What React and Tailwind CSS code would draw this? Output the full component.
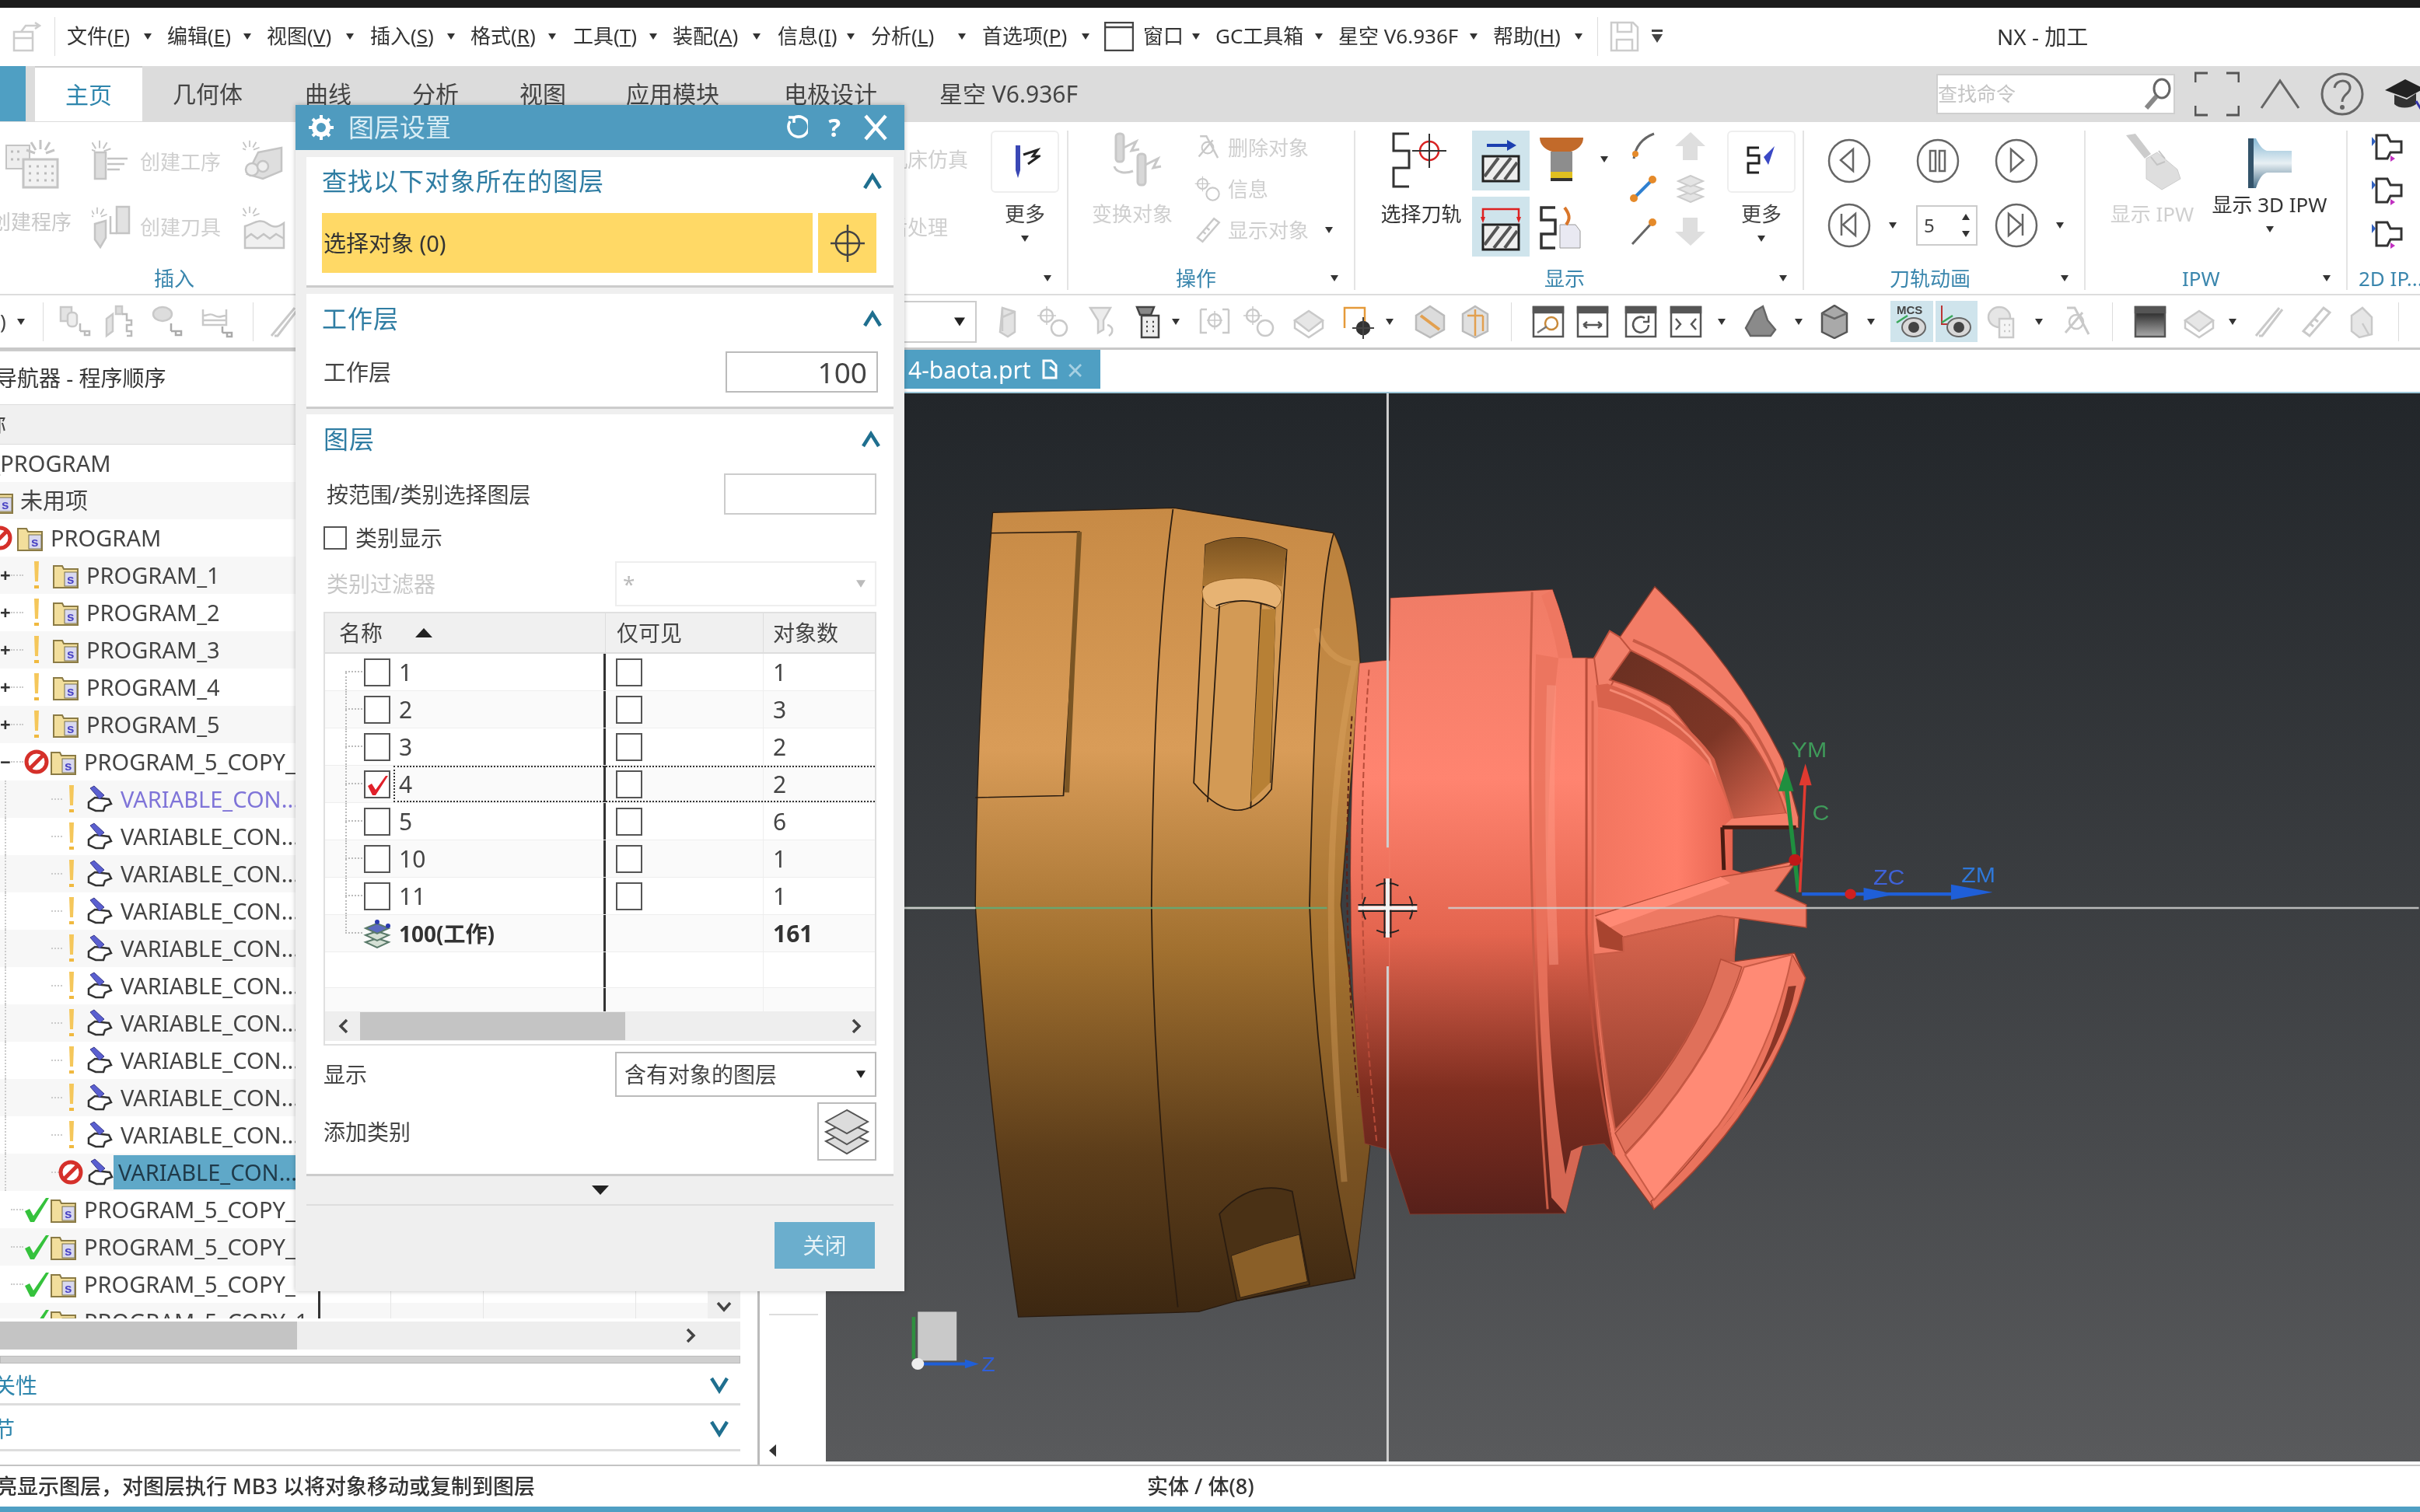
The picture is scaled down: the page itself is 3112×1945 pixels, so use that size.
import React from "react";

const Caret = ({ className = "", fill = "#333" }) => (
  <svg className={`w-[10px] h-[10px] shrink-0 ${className}`} viewBox="0 0 10 10">
    <path d="M0 1h10L5 9z" fill={fill} />
  </svg>
);

const Sep = ({ className = "" }) => <div className={`w-[1px] h-[50px] bg-[#dcdcdc] shrink-0 ${className}`} />;

/* ---------- small drawings ---------- */
function Folder({ className = "" }) {
  return (
    <svg className={`w-[33px] h-[33px] shrink-0 ${className}`} viewBox="0 0 33 33">
      <path d="M1 4h11l2 4h18v24H1z" fill="#f2de9c" stroke="#8b7b45" strokeWidth="2" />
      <rect x="15" y="12" width="16" height="18" fill="#d9d9ef" stroke="#77704f" />
      <text x="18" y="27" fontSize="17" fontWeight="700" fill="#4a44c4" fontFamily="Liberation Sans">s</text>
    </svg>
  );
}
function NoEntry({ className = "" }) {
  return (
    <svg className={`w-[34px] h-[34px] shrink-0 ${className}`} viewBox="0 0 34 34">
      <circle cx="17" cy="17" r="13" fill="#fff" stroke="#d5302a" strokeWidth="5" />
      <path d="M8 26L26 8" stroke="#d5302a" strokeWidth="5" />
    </svg>
  );
}
function Warn({ className = "" }) {
  return (
    <svg className={`w-[8px] h-[38px] shrink-0 ${className}`} viewBox="0 0 8 38">
      <path d="M1 1h6l-1 26H2z" fill="#f5c75a" />
      <rect x="1" y="32" width="6" height="4" fill="#f0b93f" />
    </svg>
  );
}
function OpIcon({ className = "" }) {
  return (
    <svg className={`w-[34px] h-[36px] shrink-0 ${className}`} viewBox="0 0 34 36">
      <path d="M3 22l8-6 18 2 3 6-8 3-2 6H12L3 29z" fill="#fff" stroke="#333" strokeWidth="2.5" />
      <path d="M5 4l5-3 13 12-6 5z" fill="#5a5fd0" stroke="#3a3a8a" />
    </svg>
  );
}
function GreenCheck({ className = "" }) {
  return (
    <svg className={`w-[34px] h-[34px] shrink-0 ${className}`} viewBox="0 0 34 34">
      <path d="M2 19l6-3 5 9L29 2h4L14 33H9z" fill="#35c23c" />
    </svg>
  );
}
function Chevron({ up = false, className = "" }) {
  return (
    <svg className={`w-[26px] h-[22px] shrink-0 ${className}`} viewBox="0 0 26 22">
      <path d={up ? "M3 20L13 4l10 16" : "M3 2l10 16L23 2"} fill="none" stroke="#1f6f8f" strokeWidth="4.5" />
    </svg>
  );
}
function Arrow({ left = false, className = "" }) {
  return (
    <svg className={`w-[16px] h-[20px] shrink-0 ${className}`} viewBox="0 0 16 20">
      <path d={left ? "M12 2L4 10l8 8" : "M4 2l8 8-8 8"} fill="none" stroke="#444" strokeWidth="3.5" />
    </svg>
  );
}

const burst = "M30 1v12M18 4l6 10M42 4l-6 10M12 14l11 4M48 14l-11 4";

/* greyed-out ribbon / toolbar glyphs, the video blur makes them soft shapes */
function Ghost({ kind = "a", className = "w-[44px] h-[44px]" }) {
  const g = "#c9c9c9";
  return (
    <svg className={`shrink-0 ${className}`} viewBox="0 0 44 44" fill="none" stroke={g} strokeWidth="2.5">
      {kind === "a" && (
        <>
          <path d="M14 4l16 5v26l-9 6-10-6z" fill="#e3e3e3" />
          <path d="M14 4v30M30 9L14 16" />
        </>
      )}
      {kind === "b" && (
        <>
          <circle cx="14" cy="14" r="8" />
          <path d="M14 2v24M2 14h24" strokeWidth="1.5" />
          <circle cx="30" cy="30" r="10" />
        </>
      )}
      {kind === "c" && (
        <>
          <path d="M6 4h26l-9 16v12l-7 4V20z" fill="#ececec" />
          <path d="M28 26c8 2 8 10 2 14" />
        </>
      )}
      {kind === "d" && (
        <>
          <path d="M4 20L22 8l18 12-18 14z" fill="#e6e6e6" />
          <path d="M4 20v10l18 12 18-12V20" />
        </>
      )}
      {kind === "e" && (
        <>
          <path d="M4 6h8M4 6v30h8M40 6h-8M40 6v30h-8" />
          <circle cx="22" cy="20" r="8" />
          <path d="M22 8v24M12 20h20" strokeWidth="1.5" />
        </>
      )}
      {kind === "f" && (
        <>
          <path d="M10 4L20 4 38 38M30 10L8 36" strokeWidth="3" />
          <circle cx="22" cy="22" r="9" />
        </>
      )}
      {kind === "g" && (
        <>
          <ellipse cx="18" cy="16" rx="14" ry="13" fill="#e6e6e6" />
          <rect x="18" y="18" width="18" height="24" fill="#f5f5f5" />
          <path d="M24 26h2M24 34h2M30 26h2M30 34h2" />
        </>
      )}
      {kind === "h" && <path d="M6 40L36 4M10 40l4 0L40 6" strokeWidth="3" />}
      {kind === "i" && <path d="M6 34L32 4l8 6-26 30zM14 24l5 4M20 18l5 4" strokeWidth="3" />}
      {kind === "j" && (
        <>
          <path d="M10 14l14-10 12 12v22l-16 4-10-8z" fill="#e6e6e6" />
          <path d="M24 24l8 14" />
        </>
      )}
      {kind === "n1" && (
        <>
          <rect x="3" y="3" width="14" height="18" fill="#e3e3e3" />
          <rect x="12" y="10" width="12" height="18" rx="5" fill="#eee" />
          <path d="M28 24v10M28 34h10M34 34h6v5h-6z" stroke="#bbb" />
        </>
      )}
      {kind === "n2" && (
        <>
          <rect x="18" y="2" width="8" height="10" fill="#ddd" />
          <path d="M6 18l8-6v22l-8 6z" fill="#e3e3e3" />
          <path d="M26 12h6v8h6v6h-6v8h6v6h-6" stroke="#bbb" />
        </>
      )}
      {kind === "n3" && (
        <>
          <ellipse cx="15" cy="12" rx="12" ry="9" fill="#ddd" />
          <path d="M26 24v10M26 34h10M32 34h7v5h-7z" stroke="#aaa" />
        </>
      )}
      {kind === "n4" && (
        <>
          <path d="M3 6v20h30V6M3 14c8 0 8-4 15 0s8 0 15 0M3 20h30" />
          <path d="M28 28v8M28 36h8M34 36h6v5h-6z" stroke="#aaa" />
        </>
      )}
    </svg>
  );
}
function ProgGhost() {
  return (
    <svg className="w-[72px] h-[72px] mt-[5px] shrink-0" viewBox="0 0 72 72" fill="none" stroke="#c4c4c4" strokeWidth="2">
      <rect x="4" y="14" width="30" height="30" fill="#eee" />
      <rect x="26" y="32" width="44" height="36" fill="#f2f2f2" strokeWidth="3" />
      <path d="M33 41h3M43 41h3M53 41h3M62 41h3M33 50h3M43 50h3M53 50h3M62 50h3M33 59h3M43 59h3M53 59h3M62 59h3M10 22h3M18 22h3M10 32h3M18 32h3" strokeWidth="3" stroke="#bbb" />
      <path d={burst} transform="translate(18 6)" strokeWidth="3" />
    </svg>
  );
}
function OpGhost() {
  return (
    <svg className="w-[48px] h-[56px] shrink-0" viewBox="0 0 48 56" fill="none" stroke="#c4c4c4" strokeWidth="2.5">
      <rect x="4" y="16" width="14" height="34" fill="#dedede" />
      <path d="M20 24h26M20 31h22M20 38h16" />
      <path d={burst} transform="translate(-14 0) scale(.8)" />
    </svg>
  );
}
function ToolGhost() {
  return (
    <svg className="w-[50px] h-[56px] shrink-0" viewBox="0 0 50 56" fill="none" stroke="#c4c4c4" strokeWidth="2.5">
      <path d="M4 24l14-4v22l-7 12-7-10z" fill="#ddd" />
      <rect x="32" y="2" width="16" height="34" fill="#e2e2e2" />
      <path d="M24 14v22h8" />
      <path d={burst} transform="translate(-14 2) scale(.7)" />
    </svg>
  );
}
function GeoGhost() {
  return (
    <svg className="w-[56px] h-[56px] mt-[12px] shrink-0" viewBox="0 0 56 56" fill="none" stroke="#c4c4c4" strokeWidth="2.5">
      <path d="M20 16l30-6v30L26 50 6 44z" fill="#dedede" />
      <circle cx="12" cy="38" r="8" fill="#eee" />
      <circle cx="26" cy="34" r="7" fill="#eee" />
      <path d={burst} transform="translate(-12 0) scale(.7)" />
    </svg>
  );
}
function WorkGhost() {
  return (
    <svg className="w-[56px] h-[56px] mt-[29px] shrink-0" viewBox="0 0 56 56" fill="none" stroke="#c4c4c4" strokeWidth="2.5">
      <path d="M3 26v28h50V22c-8 6-14 6-22 0s-16 0-28 4z" fill="#f0f0f0" />
      <path d="M3 42l8-6 8 6 8-6 8 6 8-6 10 6" />
      <path d={burst} transform="translate(-12 0) scale(.7)" />
    </svg>
  );
}
function TransformGhost() {
  return (
    <svg className="w-[75px] h-[72px] mt-[2px] shrink-0" viewBox="0 0 75 72" fill="none" stroke="#c8c8c8" strokeWidth="3">
      <rect x="16" y="2" width="10" height="36" rx="4" fill="#d8d8d8" />
      <path d="M26 20l16-8-6 12 10-2" />
      <rect x="44" y="28" width="10" height="40" rx="4" fill="#d8d8d8" />
      <path d="M54 42l16-8-6 12 10-2M14 44c2 8 14 10 24 6" />
    </svg>
  );
}
function ToolMini({ kind }) {
  return (
    <svg className="w-[44px] h-[44px] shrink-0" viewBox="0 0 44 44" fill="none" stroke="#444" strokeWidth="2.5">
      {kind === "filter" && (
        <>
          <path d="M8 3h22l-4 10H12z" fill="#888" />
          <rect x="14" y="14" width="22" height="28" fill="#eee" />
          <path d="M20 22h2M28 22h2M20 28h2M28 28h2M20 34h2M28 34h2" />
        </>
      )}
      {kind === "target" && (
        <>
          <path d="M4 30V4h26v18" stroke="#e59a3a" />
          <circle cx="28" cy="30" r="8" fill="#333" stroke="#333" />
          <path d="M28 16v28M14 30h28" strokeWidth="2" />
        </>
      )}
      {kind === "cubeA" && (
        <>
          <path d="M22 2l18 12v18L22 42 4 32V14z" fill="#dcdcdc" stroke="#bbb" />
          <path d="M10 14l24 18" stroke="#e2a050" strokeWidth="4" />
        </>
      )}
      {kind === "cubeB" && (
        <>
          <path d="M22 2l16 10v22L22 42 6 34V12z" fill="#e0e0e0" stroke="#bbb" />
          <path d="M22 6v34M12 14l20 0M32 14v20" stroke="#e2a050" />
        </>
      )}
      {kind === "rock" && <path d="M14 8l10-6 6 18 10 12-6 8H8L2 30z" fill="#8a8a8a" stroke="#666" />}
      {kind === "solid" && (
        <>
          <path d="M22 1l16 10v24L22 43 6 35V11z" fill="#a9a9a9" stroke="#555" />
          <path d="M6 11l16 7 16-7" stroke="#666" />
        </>
      )}
    </svg>
  );
}
function WinMini({ kind }) {
  return (
    <svg className="w-[44px] h-[44px] shrink-0" viewBox="0 0 44 44" fill="none" stroke="#555" strokeWidth="2.5">
      <rect x="3" y="3" width="38" height="38" fill={kind === "black" ? "url(#blk)" : "#fff"} />
      <rect x="3" y="3" width="38" height="7" fill="#555" />
      {kind === "black" && (
        <defs>
          <linearGradient id="blk" x1="0" y1="0" x2="0" y2="1">
            <stop offset="0" stopColor="#111" />
            <stop offset="1" stopColor="#aaa" />
          </linearGradient>
        </defs>
      )}
      {kind === "zoom" && <circle cx="26" cy="24" r="8" stroke="#c98a3a" />}
      {kind === "zoom" && <path d="M8 36l12-8" stroke="#777" />}
      {kind === "pan" && <path d="M10 26h24M10 26l5-4M10 26l5 4M34 26l-5-4M34 26l-5 4" />}
      {kind === "rot" && <path d="M32 26a10 10 0 1 1-5-9M32 14v8h-7" />}
      {kind === "fit" && <path d="M9 18l6 7-6 7M35 18l-6 7 6 7" />}
    </svg>
  );
}
function EyeMini({ mcs }) {
  return (
    <svg className="w-[54px] h-[52px]" viewBox="0 0 54 52" fill="none">
      {mcs ? (
        <text x="8" y="17" fontSize="15" fontWeight="700" fill="#444" fontFamily="Liberation Sans">MCS</text>
      ) : (
        <path d="M8 6v24h16" stroke="#b33" strokeWidth="2" />
      )}
      <path d="M8 28l14-9" stroke="#3aa75a" strokeWidth="2.5" />
      <ellipse cx="30" cy="34" rx="15" ry="12" fill="#d8d8d8" stroke="#666" strokeWidth="2" />
      <circle cx="30" cy="34" r="7" fill="#444" />
    </svg>
  );
}
function CircleBtn({ kind }) {
  const d = {
    prev: "M33 14L17 28l16 14z",
    next: "M21 14l16 14-16 14z",
    first: "M18 14v28M36 14L20 28l16 14z",
    last: "M36 14v28M18 14l16 14-16 14z",
  }[kind];
  return (
    <svg className="w-[56px] h-[58px] shrink-0" viewBox="0 0 56 58" fill="none" stroke="#666" strokeWidth="2.5">
      <ellipse cx="28" cy="29" rx="26" ry="27" />
      {kind === "pause" ? (
        <>
          <rect x="18" y="16" width="7" height="26" />
          <rect x="30" y="16" width="7" height="26" />
        </>
      ) : (
        <path d={d} />
      )}
    </svg>
  );
}

/* ---------- top of the window ---------- */
function MenuCell({ label, hot, className }) {
  return (
    <div className={`flex items-center justify-between shrink-0 ${className}`}>
      <span className="whitespace-nowrap">
        {label}
        {hot && (
          <>
            (<u>{hot}</u>)
          </>
        )}
      </span>
      <Caret />
    </div>
  );
}

function MenuBar() {
  return (
    <div className="h-[75px] flex items-center bg-white text-[26px] text-[#333] shrink-0 pb-[2px]">
      <svg className="w-[40px] h-[40px] ml-[15px] shrink-0" viewBox="0 0 40 40" fill="none" stroke="#ccc" strokeWidth="2.5">
        <path d="M3 14h24v24H3zM3 22h24M12 14l6-8h16M30 2l6 4-6 4" />
      </svg>
      <Sep className="ml-[15px]" />
      <MenuCell label="文件" hot="F" className="w-[109px] ml-[15px]" />
      <MenuCell label="编辑" hot="E" className="w-[108px] ml-[20px]" />
      <MenuCell label="视图" hot="V" className="w-[112px] ml-[20px]" />
      <MenuCell label="插入" hot="S" className="w-[109px] ml-[21px]" />
      <MenuCell label="格式" hot="R" className="w-[110px] ml-[20px]" />
      <MenuCell label="工具" hot="T" className="w-[108px] ml-[22px]" />
      <MenuCell label="装配" hot="A" className="w-[113px] ml-[20px]" />
      <MenuCell label="信息" hot="I" className="w-[99px] ml-[22px]" />
      <MenuCell label="分析" hot="L" className="w-[122px] ml-[21px]" />
      <MenuCell label="首选项" hot="P" className="w-[138px] ml-[21px]" />
      <svg className="w-[38px] h-[38px] ml-[19px] shrink-0" viewBox="0 0 38 38" fill="none" stroke="#444" strokeWidth="2.5">
        <rect x="1" y="1" width="36" height="36" />
        <path d="M1 7h36" />
      </svg>
      <MenuCell label="窗口" className="w-[73px] ml-[12px]" />
      <MenuCell label="GC工具箱" className="w-[138px] ml-[20px]" />
      <MenuCell label="星空 V6.936F" className="w-[179px] ml-[20px]" />
      <MenuCell label="帮助" hot="H" className="w-[115px] ml-[20px]" />
      <Sep className="ml-[19px]" />
      <svg className="w-[38px] h-[40px] ml-[15px] shrink-0" viewBox="0 0 38 40" fill="none" stroke="#ccc" strokeWidth="2.5">
        <path d="M2 2h28l6 6v30H2zM10 2v12h18V2M9 38V24h20v14" />
      </svg>
      <svg className="w-[14px] h-[18px] ml-[16px] shrink-0" viewBox="0 0 14 18">
        <path d="M0 0h14v3H0zM0 6h14L7 17z" fill="#444" />
      </svg>
      <span className="ml-[430px] text-[28px] whitespace-nowrap">NX - 加工</span>
    </div>
  );
}

function RibbonTabs() {
  const tab = "shrink-0 whitespace-nowrap";
  return (
    <div className="h-[72px] flex items-center bg-[#dcdcdc] text-[30px] text-[#444] shrink-0 pb-[1px]">
      <div className="w-[33px] h-full bg-[#4f9fc3] shrink-0" />
      <div className="w-[138px] h-full ml-[12px] bg-white flex items-center justify-center text-[#2f86ad] shrink-0 border-t-2 border-[#ccc]">主页</div>
      <span className={`${tab} w-[93px] ml-[39px]`}>几何体</span>
      <span className={`${tab} w-[60px] ml-[77px]`}>曲线</span>
      <span className={`${tab} w-[60px] ml-[78px]`}>分析</span>
      <span className={`${tab} w-[60px] ml-[78px]`}>视图</span>
      <span className={`${tab} w-[120px] ml-[77px]`}>应用模块</span>
      <span className={`${tab} w-[120px] ml-[83px]`}>电极设计</span>
      <span className={`${tab} w-[194px] ml-[80px]`}>星空 V6.936F</span>
      <div className="w-[307px] h-[52px] ml-[1088px] bg-white border-2 border-[#cfcfcf] flex items-center justify-between pr-[2px] text-[25px] text-[#c4c4c4] shrink-0">
        <span>查找命令</span>
        <svg className="w-[38px] h-[44px]" viewBox="0 0 38 44" fill="none" stroke="#666" strokeWidth="3">
          <ellipse cx="25" cy="15" rx="10" ry="12" />
          <path d="M18 25L5 40" strokeWidth="6" stroke="#888" />
        </svg>
      </div>
      <svg className="w-[58px] h-[58px] ml-[25px] shrink-0" viewBox="0 0 58 58" fill="none" stroke="#555" strokeWidth="3">
        <path d="M1 14V2h16M41 2h16v12M1 44v12h16M41 56h16V44" />
      </svg>
      <svg className="w-[52px] h-[40px] ml-[26px] shrink-0" viewBox="0 0 52 40" fill="none" stroke="#666" strokeWidth="3">
        <path d="M2 38L26 3l24 35" />
      </svg>
      <svg className="w-[56px] h-[56px] ml-[26px] shrink-0" viewBox="0 0 56 56" fill="none" stroke="#666" strokeWidth="3">
        <circle cx="28" cy="28" r="26" />
        <path d="M18 20c2-12 20-12 20 0 0 8-10 8-10 18" />
        <circle cx="28" cy="45" r="1.5" />
      </svg>
      <svg className="w-[50px] h-[46px] ml-[27px] shrink-0" viewBox="0 0 50 46">
        <path d="M0 18L26 4l24 12-22 12z" fill="#222" />
        <path d="M12 24v12c6 6 20 6 28 0V22L28 30z" fill="#333" />
        <path d="M40 32l6 10" stroke="#33a" strokeWidth="3" />
      </svg>
    </div>
  );
}

function MoreBox({ children }) {
  return (
    <div className="w-[88px] flex flex-col items-center shrink-0">
      <div className="w-[88px] h-[80px] rounded-[6px] border-2 border-[#eee] flex items-center justify-center">{children}</div>
      <span className="text-[26px] leading-[30px] mt-[12px] text-[#444] whitespace-nowrap">更多</span>
      <Caret className="mt-[12px]" />
    </div>
  );
}

function Group({ w, label, pad, caret = true, children }) {
  return (
    <div className={`h-[205px] shrink-0 flex flex-col border-r-2 border-[#e4e4e4] ${w}`}>
      <div className="h-[175px] flex">{children}</div>
      <div className={`h-[30px] flex items-center justify-between pr-[20px] ${pad}`}>
        <span className="text-[26px] text-[#3a86ad] whitespace-nowrap">{label}</span>
        {caret && <Caret />}
      </div>
    </div>
  );
}

function SmallRow({ kind, label }) {
  return (
    <div className="h-[44px] flex items-center text-[26px] text-[#cfcfcf] whitespace-nowrap">
      <Ghost kind={kind} className="w-[36px] h-[40px]" />
      <span className="ml-[8px]">{label}</span>
    </div>
  );
}

function Ribbon() {
  return (
    <div className="h-[223px] bg-white flex pt-[11px] border-b-2 border-[#ddd] shrink-0 overflow-hidden">
      <Group w="w-[1374px]" label="插入" pad="pl-[198px]">
        <div className="w-[104px] ml-[-12px] flex flex-col items-center shrink-0 text-[26px] text-[#c8c8c8]">
          <ProgGhost />
          <span className="mt-[25px] leading-[30px] whitespace-nowrap">创建程序</span>
        </div>
        <div className="ml-[26px] w-[170px] flex flex-col shrink-0 text-[26px] text-[#cfcfcf] whitespace-nowrap">
          <div className="mt-[12px] h-[56px] flex items-center">
            <OpGhost />
            <span className="ml-[14px]">创建工序</span>
          </div>
          <div className="mt-[28px] h-[56px] flex items-center">
            <ToolGhost />
            <span className="ml-[12px]">创建刀具</span>
          </div>
        </div>
        <div className="ml-[24px] w-[56px] flex flex-col shrink-0">
          <GeoGhost />
          <WorkGhost />
        </div>
        <div className="ml-[773px] w-[104px] flex flex-col shrink-0 text-[26px] text-[#cfcfcf] whitespace-nowrap">
          <span className="mt-[22px] leading-[30px]">机床仿真</span>
          <span className="mt-[57px] leading-[30px]">后处理</span>
        </div>
        <div className="ml-[29px]">
          <MoreBox>
            <svg className="w-[40px] h-[46px]" viewBox="0 0 40 46">
              <path d="M8 2h6v32l-3 10-3-10z" fill="#3a48b5" />
              <path d="M18 14l18-6-6 8h8l-14 10" fill="none" stroke="#222" strokeWidth="3" />
            </svg>
          </MoreBox>
        </div>
      </Group>

      <Group w="w-[369px]" label="操作" pad="pl-[138px]">
        <div className="ml-[30px] w-[104px] flex flex-col items-center shrink-0">
          <TransformGhost />
          <span className="mt-[18px] leading-[30px] text-[26px] text-[#cfcfcf] whitespace-nowrap">变换对象</span>
        </div>
        <div className="ml-[27px] flex flex-col gap-[9px] shrink-0">
          <SmallRow kind="f" label="删除对象" />
          <SmallRow kind="b" label="信息" />
          <div className="flex items-center">
            <SmallRow kind="i" label="显示对象" />
            <Caret className="ml-[21px]" />
          </div>
        </div>
      </Group>

      <Group w="w-[577px]" label="显示" pad="pl-[243px]">
        <div className="ml-[32px] w-[105px] flex flex-col items-center shrink-0">
          <svg className="w-[75px] h-[72px] mt-[2px]" viewBox="0 0 75 72" fill="none">
            <path d="M22 2H2v22h20v22H2v24h20" stroke="#333" strokeWidth="3" />
            <circle cx="48" cy="24" r="12" stroke="#d82222" strokeWidth="2.5" />
            <path d="M48 2v44M26 24h44" stroke="#333" strokeWidth="2" />
          </svg>
          <span className="mt-[18px] leading-[30px] text-[26px] text-[#333] whitespace-nowrap">选择刀轨</span>
        </div>
        <div className="ml-[13px] w-[74px] flex flex-col gap-[8px] shrink-0">
          <div className="h-[77px] bg-[#cfe4ec] flex items-center justify-center">
            <svg className="w-[52px] h-[60px]" viewBox="0 0 52 60" fill="none">
              <path d="M8 10h32" stroke="#1c3fb0" strokeWidth="4" />
              <path d="M34 3l12 7-12 7z" fill="#1c3fb0" />
              <rect x="3" y="24" width="46" height="32" fill="#eee" stroke="#222" strokeWidth="3" />
              <path d="M5 50l18-24M17 54l22-28M31 54l16-22" stroke="#555" strokeWidth="4" />
            </svg>
          </div>
          <div className="h-[77px] bg-[#cfe4ec] flex items-center justify-center">
            <svg className="w-[52px] h-[66px]" viewBox="0 0 52 66" fill="none">
              <path d="M3 24V10h46v14" stroke="#d22" strokeWidth="2.5" />
              <path d="M3 28l-3-8h6zM49 28l-3-8h6z" fill="#d22" />
              <rect x="3" y="30" width="46" height="32" fill="#eee" stroke="#222" strokeWidth="3" />
              <path d="M5 56l18-24M17 60l22-28M31 60l16-22" stroke="#555" strokeWidth="4" />
            </svg>
          </div>
        </div>
        <div className="ml-[11px] w-[60px] flex flex-col shrink-0">
          <svg className="w-[60px] h-[60px] mt-[7px]" viewBox="0 0 60 60">
            <path d="M2 2h56c0 10-8 16-16 18H18C10 18 2 12 2 2z" fill="#c26a2a" />
            <rect x="16" y="20" width="28" height="26" fill="#8d8d8d" />
            <rect x="16" y="46" width="28" height="8" fill="#e0c020" />
            <rect x="16" y="54" width="28" height="4" fill="#333" />
          </svg>
          <svg className="w-[56px] h-[56px] mt-[30px]" viewBox="0 0 56 56" fill="none">
            <path d="M22 2H4v16h18v18H4v18h18" stroke="#333" strokeWidth="3.5" />
            <path d="M28 24h20l6 8v22H28z" fill="#e9e9f2" stroke="#999" />
            <path d="M34 2c6 8 8 14 2 22" stroke="#d9762a" strokeWidth="4" />
          </svg>
        </div>
        <Caret className="ml-[20px] mt-[32px]" />
        <div className="ml-[27px] w-[36px] flex flex-col gap-[19px] pt-[2px] shrink-0">
          <svg className="w-[36px] h-[36px]" viewBox="0 0 36 36" fill="none">
            <path d="M6 34C8 20 16 8 32 2" stroke="#666" strokeWidth="3" />
            <circle cx="8" cy="28" r="4" fill="#e58a2a" />
          </svg>
          <svg className="w-[36px] h-[36px]" viewBox="0 0 36 36" fill="none">
            <path d="M6 30L30 6" stroke="#2f80d0" strokeWidth="4" />
            <circle cx="6" cy="30" r="5" fill="#e58a2a" />
            <circle cx="30" cy="6" r="5" fill="#e58a2a" />
          </svg>
          <svg className="w-[36px] h-[36px]" viewBox="0 0 36 36" fill="none">
            <path d="M4 34L28 8" stroke="#666" strokeWidth="3" />
            <circle cx="30" cy="6" r="5" fill="#e58a2a" />
          </svg>
        </div>
        <div className="ml-[23px] w-[39px] flex flex-col gap-[19px] pt-[2px] shrink-0">
          <svg className="w-[39px] h-[36px]" viewBox="0 0 39 36"><path d="M20 0l19 18H29v18H10V18H0z" fill="#dedede" /></svg>
          <svg className="w-[39px] h-[36px]" viewBox="0 0 39 36" fill="#e4e4e4" stroke="#ccc" strokeWidth="2">
            <path d="M20 22L4 28l16 7 16-7z" />
            <path d="M20 12L4 18l16 7 16-7z" />
            <path d="M20 1L4 8l16 7 16-7z" />
          </svg>
          <svg className="w-[39px] h-[36px]" viewBox="0 0 39 36"><path d="M10 0h19v18h10L20 36 0 18h10z" fill="#dedede" /></svg>
        </div>
        <div className="ml-[28px]">
          <MoreBox>
            <svg className="w-[42px] h-[44px]" viewBox="0 0 42 44" fill="none">
              <path d="M18 4H4v10h14v10H4v12h14" stroke="#222" strokeWidth="3" />
              <path d="M38 2L24 16l6 10z" fill="#3a48c5" />
            </svg>
          </MoreBox>
        </div>
      </Group>

      <Group w="w-[362px]" label="刀轨动画" pad="pl-[110px]">
        <div className="flex flex-col">
          <div className="flex mt-[10px]">
            <div className="ml-[30px]"><CircleBtn kind="prev" /></div>
            <div className="ml-[58px]"><CircleBtn kind="pause" /></div>
            <div className="ml-[45px]"><CircleBtn kind="next" /></div>
          </div>
          <div className="flex items-center mt-[25px]">
            <div className="ml-[30px]"><CircleBtn kind="first" /></div>
            <Caret className="ml-[23px]" />
            <div className="ml-[25px] w-[79px] h-[52px] border-2 border-[#ccc] flex items-center justify-between px-[8px] text-[24px] text-[#444] shrink-0">
              <span>5</span>
              <div className="flex flex-col gap-[12px]">
                <Caret className="rotate-180" />
                <Caret />
              </div>
            </div>
            <div className="ml-[22px]"><CircleBtn kind="last" /></div>
            <Caret className="ml-[23px]" />
          </div>
        </div>
      </Group>

      <Group w="w-[337px]" label="IPW" pad="pl-[124px]">
        <div className="ml-[30px] w-[111px] flex flex-col items-center shrink-0">
          <svg className="w-[76px] h-[76px] mt-[2px]" viewBox="0 0 76 76">
            <path d="M4 4l12-2 20 26-8 6z" fill="#ccc" />
            <path d="M30 34l14-8 26 22 4 12-24 14-20-14z" fill="#dedede" stroke="#ccc" />
            <path d="M36 32l8 10 10-4M46 24l8 10" fill="none" stroke="#c4c4c4" strokeWidth="2" />
          </svg>
          <span className="mt-[14px] leading-[30px] text-[26px] text-[#cfcfcf] whitespace-nowrap">显示 IPW</span>
        </div>
        <div className="ml-[19px] w-[153px] flex flex-col items-center shrink-0">
          <svg className="w-[60px] h-[64px] mt-[10px]" viewBox="0 0 60 64">
            <defs>
              <linearGradient id="ipw" x1="0" y1="0" x2="0" y2="1">
                <stop offset="0" stopColor="#86b8d4" />
                <stop offset=".5" stopColor="#e8f0f4" />
                <stop offset="1" stopColor="#48708a" />
              </linearGradient>
            </defs>
            <path d="M2 0h10c4 8 8 14 14 16h32v28H26c-6 2-10 8-14 20H2z" fill="url(#ipw)" />
            <rect x="2" y="0" width="7" height="64" fill="#33536a" />
          </svg>
          <span className="mt-[6px] leading-[30px] text-[26px] text-[#333] whitespace-nowrap">显示 3D IPW</span>
          <Caret className="mt-[12px]" />
        </div>
      </Group>

      <Group w="w-[100px]" label="2D IP..." pad="pl-[14px]" caret={false}>
        <div className="ml-[31px] flex flex-col gap-[18px] pt-[2px] shrink-0">
          {[0, 1, 2].map((i) => (
            <svg key={i} className="w-[44px] h-[38px]" viewBox="0 0 44 38" fill="none">
              <path d="M6 4h14l4 8h14v14H24l-4 8H6z" fill="#fff" stroke="#333" strokeWidth="3" />
              <path d="M0 6l5 6-5 6z" fill="#2f60c0" />
              <path d="M24 30l6 4-6 4z" fill="#c030c0" />
            </svg>
          ))}
        </div>
      </Group>
    </div>
  );
}

function Toolbar() {
  return (
    <div className="h-[70px] bg-white border-b-[3px] border-[#c8c8c8] flex items-center shrink-0 overflow-hidden text-[26px] text-[#444]">
      <span className="w-[8px] shrink-0">)</span>
      <Caret className="ml-[14px]" />
      <Sep className="ml-[23px]" />
      <div className="ml-[19px]"><Ghost kind="n1" /></div>
      <div className="ml-[12px]"><Ghost kind="n2" /></div>
      <div className="ml-[19px]"><Ghost kind="n3" /></div>
      <div className="ml-[20px]"><Ghost kind="n4" /></div>
      <Sep className="ml-[23px]" />
      <div className="ml-[17px]"><Ghost kind="h" /></div>
      <div className="ml-[663px] w-[206px] h-[54px] border-2 border-[#ccc] flex items-center justify-end pr-[12px] shrink-0">
        <Caret className="w-[16px] h-[14px]" fill="#222" />
      </div>
      <div className="ml-[19px]"><Ghost kind="a" /></div>
      <div className="ml-[13px]"><Ghost kind="b" /></div>
      <div className="ml-[20px]"><Ghost kind="c" /></div>
      <div className="ml-[14px]"><ToolMini kind="filter" /></div>
      <Caret className="ml-[9px]" />
      <div className="ml-[23px]"><Ghost kind="e" /></div>
      <div className="ml-[13px]"><Ghost kind="b" /></div>
      <div className="ml-[20px]"><Ghost kind="d" /></div>
      <div className="ml-[20px]"><ToolMini kind="target" /></div>
      <Caret className="ml-[13px]" />
      <div className="ml-[25px]"><ToolMini kind="cubeA" /></div>
      <div className="ml-[14px]"><ToolMini kind="cubeB" /></div>
      <Sep className="ml-[24px]" />
      <div className="ml-[25px]"><WinMini kind="zoom" /></div>
      <div className="ml-[13px]"><WinMini kind="pan" /></div>
      <div className="ml-[18px]"><WinMini kind="rot" /></div>
      <div className="ml-[14px]"><WinMini kind="fit" /></div>
      <Caret className="ml-[19px]" />
      <div className="ml-[24px]"><ToolMini kind="rock" /></div>
      <Caret className="ml-[21px]" />
      <div className="ml-[19px]"><ToolMini kind="solid" /></div>
      <Caret className="ml-[20px]" />
      <div className="ml-[20px] w-[55px] h-[53px] bg-[#cfe4ec] shrink-0"><EyeMini mcs /></div>
      <div className="ml-[3px] w-[54px] h-[53px] bg-[#cfe4ec] shrink-0"><EyeMini /></div>
      <div className="ml-[10px]"><Ghost kind="g" /></div>
      <Caret className="ml-[20px]" />
      <div className="ml-[21px]"><Ghost kind="f" /></div>
      <Sep className="ml-[24px]" />
      <div className="ml-[26px]"><WinMini kind="black" /></div>
      <div className="ml-[19px]"><Ghost kind="d" /></div>
      <Caret className="ml-[16px]" />
      <div className="ml-[19px]"><Ghost kind="h" /></div>
      <div className="ml-[17px]"><Ghost kind="i" /></div>
      <div className="ml-[14px]"><Ghost kind="j" /></div>
      <Sep className="ml-[26px]" />
    </div>
  );
}

/* ---------- navigator on the left ---------- */
const treeRows = [
  { text: "NC_PROGRAM", kind: "root" },
  { text: "未用项", kind: "unused" },
  { text: "PROGRAM", kind: "prog" },
  ...[1, 2, 3, 4, 5].map((n) => ({ text: `PROGRAM_${n}`, kind: "warn" })),
  { text: "PROGRAM_5_COPY_", kind: "open" },
  { text: "VARIABLE_CON...", kind: "op", purple: true },
  ...Array.from({ length: 9 }, () => ({ text: "VARIABLE_CON...", kind: "op" })),
  { text: "VARIABLE_CON...", kind: "opSel" },
  { text: "PROGRAM_5_COPY_", kind: "ok" },
  { text: "PROGRAM_5_COPY_", kind: "ok" },
  { text: "PROGRAM_5_COPY_", kind: "ok" },
  { text: "PROGRAM_5_COPY_1", kind: "ok" },
];

function TreeName({ row }) {
  const { kind, text } = row;
  if (kind === "root") return <span className="ml-[-53px]">{text}</span>;
  if (kind === "unused")
    return (
      <>
        <Folder className="ml-[-16px]" />
        <span className="ml-[9px]">{text}</span>
      </>
    );
  if (kind === "prog")
    return (
      <>
        <NoEntry className="ml-[-17px]" />
        <Folder className="ml-[5px]" />
        <span className="ml-[10px]">{text}</span>
      </>
    );
  const plus = kind === "warn" || kind === "open" || kind === "ok";
  if (plus) {
    return (
      <>
        <span className="w-[12px] text-center text-[24px] leading-none font-bold text-[#333] shrink-0">
          {kind === "open" ? "−" : kind === "warn" ? "+" : ""}
        </span>
        <span className="w-[16px] ml-[2px] border-b-2 border-dotted border-[#ccc] shrink-0" />
        {kind === "warn" ? <Warn className="ml-[13px] mr-[17px]" /> : kind === "open" ? <NoEntry /> : <GreenCheck />}
        {kind !== "warn" && <span className="w-[1px] shrink-0" />}
        <Folder />
        <span className="ml-[10px]">{text}</span>
      </>
    );
  }
  return (
    <>
      <span className="w-[1px] h-full ml-[6px] border-l-2 border-dotted border-[#ccc] shrink-0" />
      <span className="w-[14px] ml-[58px] border-b-2 border-dotted border-[#ccc] shrink-0" />
      {kind === "op" ? <Warn className="ml-[8px] mr-[15px]" /> : <NoEntry className="ml-[-6px] mr-[4px] w-[34px]" />}
      <OpIcon />
      <span className={`h-[44px] flex items-center ${row.purple ? "text-[#7f74d8]" : ""} ${kind === "opSel" ? "bg-[#5fa8c8] text-[#1f3a4a] w-[240px] pl-[6px]" : "ml-[10px]"}`}>
        {text}
      </span>
    </>
  );
}

function NavPanel() {
  return (
    <div className="w-[952px] h-full flex flex-col shrink-0 bg-white text-[#444] border-t-2 border-[#ccc]">
      <div className="h-[68px] flex items-center text-[28px] text-[#333] whitespace-nowrap overflow-hidden shrink-0">
        <span className="ml-[-62px]">工序导航器 - 程序顺序</span>
      </div>
      <div className="h-[52px] bg-[#f0f0f0] border-y border-[#ddd] flex items-center overflow-hidden text-[28px] shrink-0">
        <span className="ml-[-48px]">名称</span>
      </div>
      <div className="h-[1124px] flex shrink-0 overflow-hidden">
        <div className="flex-1 overflow-hidden">
          {treeRows.map((row, i) => (
            <div key={i} className={`h-[48px] flex items-center text-[29px] whitespace-nowrap overflow-hidden ${i % 2 ? "bg-[#f7f7f7]" : "bg-white"}`}>
              <div className="w-[412px] h-full flex items-center shrink-0 border-r-[3px] border-[#333] overflow-hidden">
                <TreeName row={row} />
              </div>
              <div className="w-[91px] h-full border-r border-[#e6e6e6] shrink-0" />
              <div className="w-[119px] h-full border-r border-[#e6e6e6] shrink-0" />
              <div className="w-[196px] h-full border-r border-[#e6e6e6] shrink-0" />
            </div>
          ))}
        </div>
        <div className="w-[42px] bg-[#efefef] flex flex-col justify-end items-center pb-[8px] shrink-0">
          <svg className="w-[20px] h-[14px]" viewBox="0 0 20 14"><path d="M2 2l8 9 8-9" fill="none" stroke="#444" strokeWidth="3.5" /></svg>
        </div>
      </div>
      <div className="h-[36px] mt-[4px] bg-[#eeeeee] flex items-center shrink-0">
        <div className="w-[382px] h-full bg-[#c4c4c4] shrink-0" />
        <Arrow className="ml-[498px]" />
      </div>
      <div className="h-[10px] mt-[8px] bg-[#cfcfcf] border border-[#bbb] shrink-0" />
      <div className="h-[54px] flex items-center justify-between pr-[14px] pt-[4px] border-b-[3px] border-[#ddd] overflow-hidden text-[28px] text-[#2f86ad] shrink-0">
        <span className="ml-[-36px] whitespace-nowrap">相关性</span>
        <Chevron />
      </div>
      <div className="h-[59px] flex items-center justify-between pr-[14px] pt-[3px] border-b-[3px] border-[#ddd] overflow-hidden text-[28px] text-[#2f86ad] shrink-0">
        <span className="ml-[-37px] whitespace-nowrap">细节</span>
        <Chevron />
      </div>
    </div>
  );
}

function SideStrip() {
  return (
    <div className="w-[110px] h-full bg-white shrink-0 pl-[22px]">
      <div className="h-full border-l-[3px] border-[#bbb] flex flex-col items-start pl-[12px]">
        <div className="w-[63px] h-[2px] bg-[#ddd] mt-[1240px]" />
        <div className="mt-[166px]">
          <svg className="w-[10px] h-[16px]" viewBox="0 0 10 16"><path d="M9 0v16L0 8z" fill="#333" /></svg>
        </div>
      </div>
    </div>
  );
}

/* ---------- 3D model ---------- */
function Model() {
  return (
    <svg className="absolute inset-0 w-full h-full" viewBox="1062 504 2050 1376">
      <defs>
        <linearGradient id="orange" gradientUnits="userSpaceOnUse" x1="0" y1="180" x2="0" y2="1440">
          <stop offset="0" stopColor="#c78a45" />
          <stop offset=".3" stopColor="#d99c58" />
          <stop offset=".55" stopColor="#a1702f" />
          <stop offset=".8" stopColor="#5c3d1a" />
          <stop offset="1" stopColor="#3c2711" />
        </linearGradient>
        <linearGradient id="salmon" gradientUnits="userSpaceOnUse" x1="0" y1="760" x2="0" y2="1560">
          <stop offset="0" stopColor="#f07c66" />
          <stop offset=".3" stopColor="#ff8470" />
          <stop offset=".55" stopColor="#e4654f" />
          <stop offset=".8" stopColor="#7f2e20" />
          <stop offset="1" stopColor="#57201a" />
        </linearGradient>
        <linearGradient id="dome" gradientUnits="userSpaceOnUse" x1="2050" y1="0" x2="2228" y2="0">
          <stop offset="0" stopColor="#f2755f" />
          <stop offset=".6" stopColor="#ff7f6a" />
          <stop offset="1" stopColor="#e66450" />
        </linearGradient>
        <linearGradient id="domeLow" gradientUnits="userSpaceOnUse" x1="0" y1="1180" x2="0" y2="1460">
          <stop offset="0" stopColor="#d9664f" />
          <stop offset="1" stopColor="#8f3a2a" />
        </linearGradient>
        <linearGradient id="window" gradientUnits="userSpaceOnUse" x1="2090" y1="840" x2="2280" y2="1050">
          <stop offset="0" stopColor="#6b3022" />
          <stop offset=".55" stopColor="#7d3626" />
          <stop offset="1" stopColor="#d8654f" />
        </linearGradient>
        <linearGradient id="slot" gradientUnits="userSpaceOnUse" x1="0" y1="225" x2="0" y2="300">
          <stop offset="0" stopColor="#7a5220" />
          <stop offset="1" stopColor="#a87432" />
        </linearGradient>
      </defs>

      <g transform="translate(1170 500) scale(0.893 0.829)">
        {/* orange stock */}
        <path d="M118,190 L380,183 L610,222 Q640,290 648,425 L620,800 L662,1175 L640,1380 L580,1392 L470,1415 L415,1432 L155,1440 Q110,1100 93,800 Q95,500 118,190 Z" fill="url(#orange)" stroke="#2a1c10" strokeWidth="1.5" />
        <path d="M115,222 L243,220 L220,630 L93,633" fill="none" stroke="#2a1c10" strokeWidth="2" />
        <path d="M243,220 L233,430 L225,625" fill="none" stroke="#7a5524" strokeWidth="7" />
        <path d="M378,185 Q350,400 347,800 Q350,1100 385,1425" fill="none" stroke="#2a1c10" strokeWidth="2" />
        <path d="M610,222 Q640,290 648,425 L620,800 L662,1175 L640,1380 Q585,1100 575,800 Q585,300 610,222 Z" fill="#a87330" opacity=".4" />
        <path d="M610,222 Q585,300 575,800 Q585,1100 640,1380" fill="none" stroke="#2a1c10" strokeWidth="2" />
        <path d="M585,370 Q600,420 640,425 Q606,600 606,800 Q606,1000 625,1230" fill="none" stroke="#e2a963" strokeWidth="9" opacity=".35" />
        {/* slot */}
        <path d="M425,240 Q480,215 542,248 L520,620 Q470,690 408,610 Z" fill="#d39a55" stroke="#2a1c10" strokeWidth="2" />
        <path d="M425,240 Q480,215 542,248 L535,305 Q480,280 420,305 Z" fill="url(#slot)" />
        <path d="M420,312 Q425,292 480,292 Q532,292 535,318 Q535,335 522,340 Q480,315 440,340 Q420,335 420,312 Z" fill="#e7b373" stroke="#8a5a20" />
        <path d="M445,335 L428,640 M505,330 L490,650 M440,335 Q480,318 525,338 L518,610" fill="none" stroke="#2a1c10" strokeWidth="2" />
        <path d="M505,340 L526,340 L518,610 L490,640 Z" fill="#b78035" />
        {/* lower slot */}
        <path d="M445,1280 Q490,1225 550,1245 L575,1390 L470,1415 Z" fill="#4a3115" stroke="#2a1c10" strokeWidth="2" />
        <path d="M462,1345 Q510,1325 560,1312 L572,1385 L475,1410 Z" fill="#8a5f28" stroke="#2a1c10" />
      </g>

      {/* salmon part */}
      <path d="M1748,852 L1786,848 L1788,768 L1996,757 Q2012,800 2022,845 L2050,845 L2070,810 L2083,818 L2128,753 Q2230,850 2293,977 L2313,1050 L2313,1063 L2228,1064 L2228,1118 L2240,1122 L2305,1107 L2283,1145 L2323,1163 L2323,1192 L2237,1180 L2230,1236 L2308,1225 L2322,1257 Q2280,1420 2127,1555 L2077,1487 L2063,1470 L2035,1473 L2013,1560 L1813,1561 L1786,1478 L1755,1470 Q1722,1160 1748,852 Z" fill="#f27c66" stroke="#8b3a2b" strokeWidth="1.5" />
      <path d="M1788,768 L1996,757 Q2012,800 2022,845 L2040,845 L2048,1200 Q2052,1350 2076,1485 L2063,1470 L2035,1473 L2013,1560 L1813,1561 L1786,1478 Z" fill="url(#salmon)" />
      <path d="M1748,852 L1786,848 L1786,1478 L1755,1470 Q1722,1160 1748,852 Z" fill="url(#salmon)" />
      <path d="M1996,757 Q2012,800 2022,845 L2004,845 Q1996,800 1982,765 Z" fill="#ee7761" />
      <path d="M1975,840 Q1965,1160 1995,1540 L2013,1560 L2035,1473 L2020,1480 L2013,1510 Q1985,1340 1990,1160 Q1990,960 2004,845 Z" fill="#ea735d" opacity=".85" />
      <path d="M1995,880 Q1990,1050 1998,1240" fill="none" stroke="#ff9c88" strokeWidth="12" opacity=".45" />
      <path d="M1970,760 Q1960,1160 1990,1555" fill="none" stroke="#c95c46" strokeWidth="3" />
      <path d="M1760,860 Q1738,1160 1770,1470" fill="none" stroke="#b94c39" strokeWidth="2" strokeDasharray="8 4" />
      <path d="M1738,920 Q1722,1160 1746,1410" fill="none" stroke="#5a2018" strokeWidth="2" strokeDasharray="6 4" />
      <path d="M2040,845 L2040,1200 Q2045,1350 2076,1485" fill="none" stroke="#b94c39" strokeWidth="3" />
      <path d="M2048,900 L2048,1200 Q2052,1350 2077,1450" fill="none" stroke="#d8644e" strokeWidth="3" />

      {/* notch and upper window */}
      <path d="M2070,810 L2050,845 L2058,905 L2097,835 L2083,818 Z" fill="#f2806a" stroke="#c0523e" strokeWidth="2" />
      <path d="M2097,835 Q2170,870 2230,923 Q2275,975 2297,1045 L2227,1052 Q2205,970 2147,907 Q2110,885 2070,873 Z" fill="url(#window)" stroke="#c0523e" strokeWidth="2" />
      <path d="M2100,822 Q2190,860 2250,930 Q2285,985 2300,1035" fill="none" stroke="#c95b46" strokeWidth="4" />
      <path d="M2052,880 L2067,878 Q2160,910 2205,975 L2230,1052 L2222,1056 Q2180,930 2055,908 Z" fill="#d9624c" />
      <path d="M2070,886 Q2155,915 2198,975 L2224,1052" fill="none" stroke="#f58a74" strokeWidth="3" />
      {/* dome */}
      <path d="M2055,910 Q2150,925 2200,985 Q2225,1030 2228,1064 L2228,1118 L2240,1122 L2213,1127 L2052,1177 Z" fill="url(#dome)" />
      <path d="M2227,1052 L2297,1045 L2313,1063 L2215,1063 Z" fill="#f47e68" />
      <path d="M2215,1063 H2310 M2215,1063 L2217,1118" fill="none" stroke="#4a1c12" strokeWidth="5" />
      {/* rib */}
      <path d="M2052,1177 L2213,1127 L2307,1112 L2283,1145 L2323,1163 L2323,1192 L2237,1180 L2210,1177 L2085,1205 Z" fill="#ee7963" stroke="#b54c38" strokeWidth="1.5" />
      <path d="M2052,1178 L2213,1127 L2225,1135 L2070,1192 Z" fill="#ff8a75" />
      <path d="M2052,1180 L2087,1203 L2088,1223 L2057,1217 Z" fill="#a8442f" />
      {/* lower dome, band and fin */}
      <path d="M2050,1227 L2088,1223 L2087,1205 L2210,1177 L2230,1180 L2230,1236 L2213,1233 Q2180,1350 2077,1453 Q2060,1350 2050,1227 Z" fill="url(#domeLow)" stroke="#c95b46" strokeWidth="2" />
      <path d="M2213,1233 L2240,1243 Q2200,1370 2090,1483 L2077,1457 Q2180,1350 2213,1233 Z" fill="#e0705a" stroke="#b54c38" strokeWidth="1.5" />
      <path d="M2305,1227 L2322,1257 Q2280,1420 2127,1555 L2123,1545 Q2260,1420 2305,1227 Z" fill="#ea735d" stroke="#a84432" strokeWidth="1.5" />
      <path d="M2243,1243 L2305,1227 Q2280,1350 2210,1447 L2127,1543 L2090,1485 Q2200,1370 2243,1243 Z" fill="#ff8a75" stroke="#c95b46" strokeWidth="2" />
      <path d="M2310,1267 Q2295,1350 2213,1453 Q2275,1380 2300,1268 Z" fill="#8a3526" />

      {/* crosshair lines */}
      <path d="M1062 1167H1706" stroke="#6aa56f" strokeWidth="2.5" />
      <path d="M1062 1167H1253" stroke="#c8c8c8" strokeWidth="2.5" />
      <path d="M1862 1167H3112" stroke="#d0d0d0" strokeWidth="2.5" opacity=".85" />
      <path d="M1784 504V1089M1784 1242V1880" stroke="#cfcfcf" strokeWidth="3" />
      <g fill="none" stroke="#222" strokeWidth="2">
        <circle cx="1784" cy="1167" r="32" strokeDasharray="30 20" strokeDashoffset="15" />
        <path d="M1746 1163H1822M1746 1171H1822M1780 1129V1205M1788 1129V1205" />
      </g>
      <path d="M1746 1167H1822M1784 1129V1205" stroke="#f2f2f2" strokeWidth="5" />

      {/* triad */}
      <g transform="translate(1170 500) scale(0.893 0.829)">
        <path d="M1280,780 L1262,610" stroke="#1f8f3f" strokeWidth="6" />
        <path d="M1262,585 l-11,38 h22z" fill="#1f8f3f" />
        <path d="M1282,780 L1290,600" stroke="#e03a30" strokeWidth="4" />
        <path d="M1290,580 l-9,34 h18z" fill="#e03a30" />
        <circle cx="1275" cy="730" r="9" fill="#c01818" />
        <path d="M1285,783 H1520" stroke="#1f5fd8" strokeWidth="5" />
        <path d="M1560,780 l-60,-12 v24z M1420,783 l-46,-10 v20z" fill="#1f5fd8" />
        <circle cx="1355" cy="783" r="8" fill="#d02020" />
        <text x="1270" y="570" fontSize="34" fill="#3f9a5a" fontFamily="Liberation Sans">YM</text>
        <text x="1300" y="668" fontSize="34" fill="#3f9a5a" fontFamily="Liberation Sans">C</text>
        <text x="1388" y="768" fontSize="34" fill="#3f62d8" fontFamily="Liberation Sans">ZC</text>
        <text x="1515" y="765" fontSize="34" fill="#2f78d8" fontFamily="Liberation Sans">ZM</text>
        <rect x="10" y="1432" width="56" height="76" fill="#c9c9c9" />
        <path d="M4,1440 V1505" stroke="#2f8f3f" strokeWidth="5" />
        <path d="M10,1513 H85" stroke="#1f5fd8" strokeWidth="5" />
        <path d="M98,1513 l-20,-7 v14z" fill="#1f5fd8" />
        <circle cx="10" cy="1513" r="9" fill="#eee" />
        <text x="102" y="1524" fontSize="32" fill="#2f5fd8" fontFamily="Liberation Sans">Z</text>
      </g>
    </svg>
  );
}

function RightColumn() {
  return (
    <div className="flex-1 h-full flex flex-col bg-white min-w-0">
      <div className="h-[54px] pl-[98px] shrink-0 border-t-0">
        <div className="w-[255px] h-[50px] bg-[#4f9fc3] flex items-center text-[30px] text-white pl-[8px] whitespace-nowrap">
          <span>4-baota.prt</span>
          <svg className="w-[20px] h-[26px] ml-[14px]" viewBox="0 0 20 26" fill="none" stroke="#fff" strokeWidth="3">
            <path d="M2 2h10l6 6v16H2zM10 10l8 6" />
          </svg>
          <span className="ml-[12px] text-[#a6d0e2] text-[38px] leading-none">×</span>
        </div>
      </div>
      <div className="relative h-[1376px] bg-gradient-to-b from-[#22262a] to-[#595a5c] overflow-hidden border-t-2 border-[#9cc6d8] shrink-0">
        <Model />
      </div>
    </div>
  );
}

/* ---------- layer dialog ---------- */
function Box({ className = "", children }) {
  return <div className={`border-2 border-[#555] bg-white shrink-0 flex items-center justify-center ${className}`}>{children}</div>;
}

const layers = [
  { n: "1", c: "1" },
  { n: "2", c: "3" },
  { n: "3", c: "2" },
  { n: "4", c: "2", checked: true },
  { n: "5", c: "6" },
  { n: "10", c: "1" },
  { n: "11", c: "1" },
];

function TreeGuide({ first, last }) {
  return (
    <div className="w-[22px] h-full ml-[26px] flex flex-col shrink-0">
      <div className={`h-1/2 border-b-2 border-dotted border-[#bbb] ${first ? "" : "border-l-2"}`} />
      <div className={`h-1/2 border-dotted border-[#bbb] ${last ? "" : "border-l-2"}`} />
    </div>
  );
}

function LayerTable() {
  return (
    <div className="h-[558px] mt-[7px] border-2 border-[#e0e0e0] flex flex-col shrink-0">
      <div className="h-[52px] flex bg-[#f0f0f0] border-b-2 border-[#ddd] text-[28px] text-[#444] shrink-0">
        <div className="w-[361px] flex items-center pl-[18px] border-r border-[#ddd] shrink-0">
          <span>名称</span>
          <svg className="w-[22px] h-[12px] ml-[42px]" viewBox="0 0 22 12"><path d="M11 0l11 12H0z" fill="#222" /></svg>
        </div>
        <div className="w-[203px] flex items-center pl-[14px] border-r border-[#ddd] shrink-0">仅可见</div>
        <div className="flex-1 flex items-center pl-[12px]">对象数</div>
      </div>
      <div className="h-[460px] overflow-hidden shrink-0 text-[30px] text-[#444]">
        {layers.map((l, i) => (
          <div key={l.n} className={`relative h-[48px] flex border-b border-[#eee] ${i % 2 ? "bg-[#fafafa]" : "bg-white"}`}>
            <div className="w-[361px] flex items-center border-r-[3px] border-[#333] shrink-0">
              <TreeGuide first={i === 0} />
              <Box className="w-[34px] h-[36px] ml-[2px]">
                {l.checked && (
                  <svg className="w-[30px] h-[30px]" viewBox="0 0 30 30">
                    <path d="M3 17l5-3 5 8L26 4h3L13 29H9z" fill="#e0202a" />
                  </svg>
                )}
              </Box>
              <span className="ml-[11px]">{l.n}</span>
            </div>
            <div className="w-[203px] flex items-center pl-[13px] border-r border-[#eee] shrink-0">
              <Box className="w-[34px] h-[36px]" />
            </div>
            <div className="flex-1 flex items-center pl-[12px]">{l.c}</div>
            {l.checked && <div className="absolute left-[88px] right-0 top-0 bottom-0 border-2 border-r-0 border-dotted border-[#333]" />}
          </div>
        ))}
        <div className="h-[48px] flex border-b border-[#eee] bg-[#fafafa] font-bold text-[#333]">
          <div className="w-[361px] flex items-center border-r-[3px] border-[#333] shrink-0">
            <TreeGuide last />
            <svg className="w-[36px] h-[40px] ml-[1px] shrink-0" viewBox="0 0 36 40" fill="#d5e0d5" stroke="#5a7a6a" strokeWidth="2">
              <path d="M18 26L3 31l15 7 15-7z" />
              <path d="M18 17L3 22l15 7 15-7z" />
              <path d="M18 7L3 13l15 7 15-7z" fill="#5a6ac0" />
              <circle cx="18" cy="5" r="3" fill="#2a3ab0" stroke="none" />
              <circle cx="32" cy="10" r="3" fill="#2a3ab0" stroke="none" />
            </svg>
            <span className="ml-[10px] text-[28px] whitespace-nowrap">100(工作)</span>
          </div>
          <div className="w-[203px] border-r border-[#eee] shrink-0" />
          <div className="flex-1 flex items-center pl-[12px]">161</div>
        </div>
        <div className="h-[46px] flex border-b border-[#eee]">
          <div className="w-[361px] border-r-[3px] border-[#333] shrink-0" />
          <div className="w-[203px] border-r border-[#eee] shrink-0" />
        </div>
        <div className="h-[32px] flex bg-[#fafafa]">
          <div className="w-[361px] border-r-[3px] border-[#333] shrink-0" />
          <div className="w-[203px] border-r border-[#eee] shrink-0" />
        </div>
      </div>
      <div className="h-[38px] bg-[#eeeeee] flex items-center shrink-0 px-[16px]">
        <Arrow left />
        <div className="w-[341px] h-[36px] bg-[#c4c4c4] ml-[13px] shrink-0" />
        <Arrow className="ml-auto" />
      </div>
    </div>
  );
}

function SectionHead({ label }) {
  return (
    <div className="h-[50px] flex items-center justify-between text-[#2f7da3] text-[32px] tracking-[1px] whitespace-nowrap shrink-0">
      <span>{label}</span>
      <Chevron up className="mr-[-6px]" />
    </div>
  );
}

function Dialog() {
  return (
    <div className="absolute left-[380px] top-[135px] w-[783px] h-[1526px] bg-[#efefef] flex flex-col shadow-[0_0_6px_rgba(0,0,0,.25)] text-[#444]">
      <div className="h-[58px] bg-[#4f9bbf] flex items-center pl-[16px] pr-[22px] text-[#d9edf5] text-[33px] shrink-0">
        <svg className="w-[34px] h-[34px] shrink-0" viewBox="0 0 34 34" fill="none" stroke="#fff">
          <circle cx="17" cy="17" r="9" strokeWidth="6" />
          <path d="M17 1v6M17 27v6M1 17h6M27 17h6M6 6l4 4M24 24l4 4M28 6l-4 4M10 24l-4 4" strokeWidth="4" />
        </svg>
        <span className="ml-[18px] whitespace-nowrap">图层设置</span>
        <svg className="w-[28px] h-[34px] ml-auto shrink-0" viewBox="0 0 28 34" fill="none" stroke="#fff" strokeWidth="3.5">
          <path d="M9 5a13 13 0 1 1-4 4M3 4h7v7" />
        </svg>
        <span className="ml-[26px] font-bold text-white">?</span>
        <svg className="w-[30px] h-[34px] ml-[30px] shrink-0" viewBox="0 0 30 34" stroke="#fff" strokeWidth="4.5">
          <path d="M2 2l26 30M28 2L2 32" />
        </svg>
      </div>

      <div className="h-[168px] mx-[14px] mt-[9px] bg-white border-b-[3px] border-[#cccccc] px-[20px] pt-[6px] flex flex-col shrink-0">
        <SectionHead label="查找以下对象所在的图层" />
        <div className="flex gap-[7px] mt-[16px]">
          <div className="w-[631px] h-[77px] bg-[#ffd966] flex items-center pl-[2px] text-[29px] text-[#333] whitespace-nowrap shrink-0">选择对象 (0)</div>
          <div className="w-[75px] h-[77px] bg-[#ffd966] flex items-center justify-center shrink-0">
            <svg className="w-[48px] h-[52px]" viewBox="0 0 48 52" fill="none" stroke="#444" strokeWidth="2.5">
              <circle cx="24" cy="26" r="15" />
              <path d="M24 2v48M2 26h44" />
            </svg>
          </div>
        </div>
      </div>

      <div className="h-[148px] mx-[14px] mt-[8px] bg-white border-b-[3px] border-[#cccccc] px-[20px] pt-[7px] flex flex-col shrink-0">
        <SectionHead label="工作层" />
        <div className="flex items-center justify-between mt-[17px]">
          <span className="text-[29px] ml-[2px]">工作层</span>
          <div className="w-[196px] h-[53px] border-2 border-[#bbb] flex items-center justify-end pr-[12px] text-[37px] shrink-0">100</div>
        </div>
      </div>

      <div className="h-[980px] mx-[14px] mt-[7px] bg-white border-b-[3px] border-[#cccccc] pl-[22px] pr-[22px] pt-[7px] flex flex-col shrink-0">
        <SectionHead label="图层" />
        <div className="flex items-center justify-between mt-[19px] shrink-0">
          <span className="text-[28px] ml-[4px] whitespace-nowrap">按范围/类别选择图层</span>
          <div className="w-[196px] h-[53px] border-2 border-[#ccc] shrink-0" />
        </div>
        <div className="flex items-center mt-[15px] h-[30px] shrink-0">
          <Box className="w-[30px] h-[30px]" />
          <span className="ml-[11px] text-[28px] whitespace-nowrap">类别显示</span>
        </div>
        <div className="flex items-center justify-between mt-[15px] shrink-0">
          <span className="text-[28px] text-[#c8c8c8] ml-[4px] whitespace-nowrap">类别过滤器</span>
          <div className="w-[336px] h-[58px] border-2 border-[#eee] flex items-center justify-between pl-[8px] pr-[10px] text-[#bbb] text-[28px] shrink-0">
            <span>*</span>
            <Caret className="w-[16px] h-[12px]" fill="#bbb" />
          </div>
        </div>
        <LayerTable />
        <div className="flex items-center justify-between mt-[8px] shrink-0">
          <span className="text-[28px] whitespace-nowrap">显示</span>
          <div className="w-[336px] h-[58px] border-2 border-[#bbb] flex items-center justify-between pl-[10px] pr-[10px] text-[28px] shrink-0">
            <span className="whitespace-nowrap">含有对象的图层</span>
            <Caret className="w-[16px] h-[12px]" fill="#222" />
          </div>
        </div>
        <div className="flex items-center justify-between mt-[7px] shrink-0">
          <span className="text-[28px] whitespace-nowrap">添加类别</span>
          <div className="w-[76px] h-[75px] border-2 border-[#bbb] flex items-center justify-center shrink-0">
            <svg className="w-[58px] h-[60px]" viewBox="0 0 58 60" fill="#dcdcdc" stroke="#555" strokeWidth="2">
              <path d="M29 30L2 42l27 16 27-16z" />
              <path d="M29 18L2 30l27 16 27-16z" />
              <path d="M29 2L2 17l27 15 27-15z" />
            </svg>
          </div>
        </div>
      </div>

      <div className="h-[38px] mx-[14px] flex items-center justify-center border-b-2 border-[#ddd] shrink-0">
        <svg className="w-[22px] h-[12px]" viewBox="0 0 22 12"><path d="M0 0h22L11 12z" fill="#222" /></svg>
      </div>
      <div className="flex justify-end pr-[38px] mt-[21px]">
        <div className="w-[129px] h-[60px] bg-[#6baecd] flex items-center justify-center text-[28px] text-[#e6f3f8]">关闭</div>
      </div>
    </div>
  );
}

export default function App() {
  return (
    <div className="relative w-[3112px] h-[1945px] overflow-hidden bg-white flex flex-col font-['Noto_Sans','Noto_Sans_CJK_SC',sans-serif] blur-[0.7px]">
      <div className="h-[10px] bg-[#1c1c1c] shrink-0" />
      <MenuBar />
      <RibbonTabs />
      <Ribbon />
      <Toolbar />
      <div className="h-[1434px] flex shrink-0">
        <NavPanel />
        <SideStrip />
        <RightColumn />
      </div>
      <div className="h-[54px] bg-white border-t-2 border-[#c4c4c4] flex items-center text-[27px] font-medium text-[#333] whitespace-nowrap overflow-hidden shrink-0">
        <span className="w-[1475px] ml-[-32px] shrink-0">高亮显示图层，对图层执行 MB3 以将对象移动或复制到图层</span>
        <span className="ml-[32px]">实体 / 体(8)</span>
      </div>
      <div className="h-[7px] bg-[#4f9fc3] shrink-0" />
      <Dialog />
    </div>
  );
}
